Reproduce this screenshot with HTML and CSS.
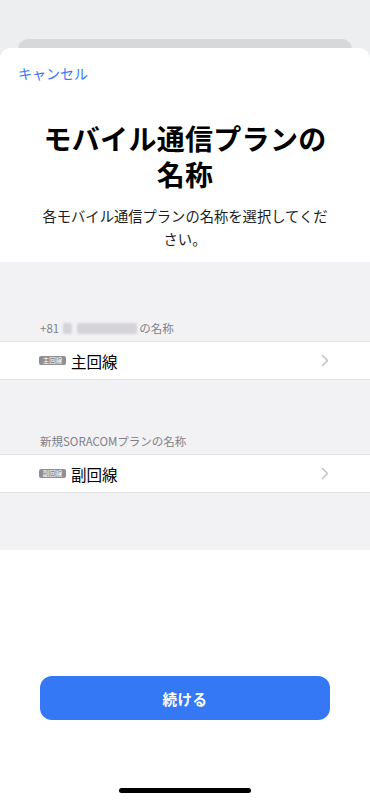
FILE: index.html
```html
<!DOCTYPE html>
<html lang="ja">
<head>
<meta charset="utf-8">
<link rel="stylesheet" href="styles.css">
</head>
<body>
<div class="screen">
  <div class="backcard"></div>
  <div class="sheet">
    <div class="nav"><span class="cancel">キャンセル</span></div>
    <h1 class="title">モバイル通信プランの<br>名称</h1>
    <p class="subtitle">各モバイル通信プランの名称を選択してくだ<br>さい。</p>
    <div class="grouped">
      <div class="section-header">+81 <span class="blur b1"></span> <span class="blur b2"></span>の名称</div>
      <div class="row">
        <span class="badge">主回線</span>
        <span class="row-label">主回線</span>
        <svg class="chevron" width="8" height="13" viewBox="0 0 8 13"><path d="M1.5 1.5 L6.5 6.5 L1.5 11.5" fill="none" stroke="#c4c4c7" stroke-width="1.6" stroke-linecap="round" stroke-linejoin="round"/></svg>
      </div>
      <div class="section-header second">新規SORACOMプランの名称</div>
      <div class="row">
        <span class="badge">副回線</span>
        <span class="row-label">副回線</span>
        <svg class="chevron" width="8" height="13" viewBox="0 0 8 13"><path d="M1.5 1.5 L6.5 6.5 L1.5 11.5" fill="none" stroke="#c4c4c7" stroke-width="1.6" stroke-linecap="round" stroke-linejoin="round"/></svg>
      </div>
    </div>
    <div class="spacer"></div>
    <div class="footer">
      <button class="continue">続ける</button>
    </div>
    <div class="home"><span class="indicator"></span></div>
  </div>
</div>
</body>
</html>
```

FILE: styles.css
```css
* { box-sizing: border-box; }
html, body { margin: 0; padding: 0; }
body {
  width: 370px;
  height: 800px;
  overflow: hidden;
  background: #eceef0;
  font-family: "Noto Sans CJK JP", "Noto Sans", sans-serif;
}
.screen {
  height: 800px;
  display: flex;
  flex-direction: column;
  padding-top: 39px;
}
.backcard {
  height: 20px;
  margin: 0 18px -11px;
  background: #d8d8da;
  border-radius: 10px 10px 0 0;
  flex: none;
}
.sheet {
  flex: 1;
  background: #ffffff;
  border-radius: 11px 11px 0 0;
  display: flex;
  flex-direction: column;
  position: relative;
}
.nav {
  height: 50px;
  padding: 12px 0 0 18px;
}
.cancel {
  color: #3478f6;
  font-size: 14px;
  line-height: 22px;
}
.title {
  margin: 22px 0 0;
  text-align: center;
  font-size: 28px;
  font-weight: 700;
  line-height: 36px;
  color: #000;
  letter-spacing: 0.3px;
}
.subtitle {
  margin: 12px 0 0;
  text-align: center;
  font-size: 14.3px;
  line-height: 23px;
  color: #1c1c1e;
}
.grouped {
  margin-top: 12px;
  background: #f2f2f5;
  height: 288px;
  padding-top: 58px;
}
.section-header {
  font-size: 11.5px;
  color: #808085;
  padding: 0 0 5px 40px;
  line-height: 16px;
  display: flex;
  align-items: center;
}
.section-header.second {
  margin-top: 53px;
}
.blur {
  display: inline-block;
  height: 11px;
  background: #d4d4d8;
  border-radius: 2px;
  filter: blur(1px);
}
.b1 { width: 9px; margin: 0 5px 0 4px; }
.b2 { width: 60px; margin-right: 2px; }
.row {
  background: #fff;
  height: 39px;
  border-top: 1px solid #e2e2e6;
  border-bottom: 1px solid #e2e2e6;
  display: flex;
  align-items: center;
  padding: 0 40px 0 39px;
}
.badge {
  background: #8e8e93;
  color: #fff;
  font-size: 6.5px;
  line-height: 9px;
  height: 9px;
  width: 27px;
  text-align: center;
  border-radius: 2px;
  margin-right: 5px;
  overflow: hidden;
}
.row-label {
  font-size: 15.5px;
  color: #000;
  flex: 1;
  line-height: 22px;
}
.chevron { margin-right: 1px; }
.spacer { flex: 1; }
.footer {
  padding: 0 40px;
}
.continue {
  width: 100%;
  height: 44px;
  border: none;
  border-radius: 12px;
  background: #3478f6;
  color: #fff;
  font-family: "Noto Sans CJK JP", sans-serif;
  font-size: 14.5px;
  font-weight: 700;
  letter-spacing: 0.5px;
  display: block;
}
.home {
  height: 80px;
  display: flex;
  justify-content: center;
  padding-top: 68px;
}
.indicator {
  width: 132px;
  height: 5px;
  background: #000;
  border-radius: 3px;
}
```
